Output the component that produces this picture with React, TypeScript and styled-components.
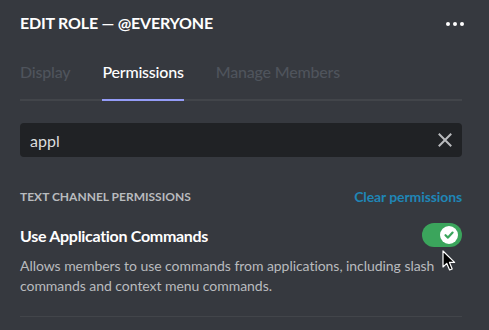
import React from "react";
import styled, { createGlobalStyle } from "styled-components";

const Global = createGlobalStyle`
  html, body { margin: 0; padding: 0; background: #36393f; }
  body { font-family: Lato, "Noto Sans", sans-serif; -webkit-font-smoothing: antialiased; }
  * { box-sizing: border-box; }
`;

const Page = styled.div`
  position: relative;
  width: 489px;
  height: 330px;
  background: #36393f;
  padding: 0 27px 0 20px;
  overflow: hidden;
  display: flex;
  flex-direction: column;
`;

const Header = styled.div`
  display: flex;
  align-items: center;
  justify-content: space-between;
  padding-top: 13px;
  height: 33px;
`;

const Title = styled.h1`
  margin: 0;
  font-size: 16px;
  line-height: 20px;
  font-weight: 700;
  color: #ffffff;
  text-transform: uppercase;
  letter-spacing: -0.2px;
`;

const Dots = styled.div`
  display: flex;
  gap: 3px;
  margin-right: -2px;
  margin-top: 2px;
`;

const Dot = styled.span`
  width: 4px;
  height: 4px;
  border-radius: 50%;
  background: #ffffff;
`;

const Tabs = styled.div`
  margin-top: 29px;
  display: flex;
  gap: 32px;
  border-bottom: 2px solid #42454a;
`;

const Tab = styled.div<{ $active?: boolean }>`
  font-size: 16px;
  line-height: 20px;
  font-weight: 500;
  letter-spacing: -0.2px;
  padding-bottom: 17px;
  margin-bottom: -2px;
  color: ${(p) => (p.$active ? "#ffffff" : "#4f545c")};
  border-bottom: 2px solid ${(p) => (p.$active ? "#949cf7" : "transparent")};
`;

const Search = styled.div`
  margin-top: 22px;
  height: 34px;
  background: #202225;
  border-radius: 4px;
  display: flex;
  align-items: center;
  padding: 0 10px;
`;

const SearchText = styled.span`
  flex: 1;
  font-size: 16px;
  color: #dcddde;
`;

const SectionHeader = styled.div`
  margin-top: 31px;
  display: flex;
  justify-content: space-between;
  align-items: center;
  height: 16px;
`;

const SectionTitle = styled.span`
  font-size: 12px;
  font-weight: 700;
  color: #b9bbbe;
  text-transform: uppercase;
`;

const LinkText = styled.span`
  font-size: 14px;
  font-weight: 700;
  color: #1f86b6;
  letter-spacing: -0.1px;
`;

const PermRow = styled.div`
  margin-top: 19px;
  display: flex;
  align-items: center;
  justify-content: space-between;
  height: 24px;
`;

const PermName = styled.span`
  font-size: 16px;
  font-weight: 700;
  color: #ffffff;
  letter-spacing: -0.3px;
`;

const Toggle = styled.div`
  width: 40px;
  height: 24px;
  border-radius: 12px;
  background: #3ba55c;
  display: flex;
  align-items: center;
  justify-content: flex-end;
  padding-right: 4px;
`;

const Knob = styled.div`
  width: 18px;
  height: 18px;
  border-radius: 50%;
  background: #ffffff;
  display: flex;
  align-items: center;
  justify-content: center;
`;

const Desc = styled.p`
  margin: 9px 0 0;
  font-size: 14px;
  line-height: 20px;
  color: #b9bbbe;
  letter-spacing: -0.05px;
`;

const Divider = styled.div`
  margin-top: 20px;
  height: 1px;
  background: #42454a;
`;

const Cursor = styled.svg`
  position: absolute;
  left: 442px;
  top: 250px;
`;

export default function App() {
  return (
    <>
      <Global />
      <Page>
        <Header>
          <Title>Edit Role — @everyone</Title>
          <Dots>
            <Dot />
            <Dot />
            <Dot />
          </Dots>
        </Header>
        <Tabs>
          <Tab>Display</Tab>
          <Tab $active>Permissions</Tab>
          <Tab>Manage Members</Tab>
        </Tabs>
        <Search>
          <SearchText>appl</SearchText>
          <svg width="14" height="14" viewBox="0 0 14 14">
            <path d="M1.5 1.5 L12.5 12.5 M12.5 1.5 L1.5 12.5" stroke="#b9bbbe" strokeWidth="2" strokeLinecap="square" />
          </svg>
        </Search>
        <SectionHeader>
          <SectionTitle>Text Channel Permissions</SectionTitle>
          <LinkText>Clear permissions</LinkText>
        </SectionHeader>
        <PermRow>
          <PermName>Use Application Commands</PermName>
          <Toggle>
            <Knob>
              <svg width="12" height="12" viewBox="0 0 12 12">
                <path d="M2.5 6.2 L5 8.6 L9.6 3.6" stroke="#3ba55c" strokeWidth="2.2" fill="none" strokeLinecap="round" strokeLinejoin="round" />
              </svg>
            </Knob>
          </Toggle>
        </PermRow>
        <Desc>
          Allows members to use commands from applications, including slash commands and context menu commands.
        </Desc>
        <Divider />
        <Cursor width="14" height="22" viewBox="0 0 14 22">
          <path d="M1 1 L1 17 L4.8 13.4 L7.6 20 L10.2 18.9 L7.5 12.4 L12.6 12.4 Z" fill="#000" stroke="#fff" strokeWidth="1.2" strokeLinejoin="round" />
        </Cursor>
      </Page>
    </>
  );
}
